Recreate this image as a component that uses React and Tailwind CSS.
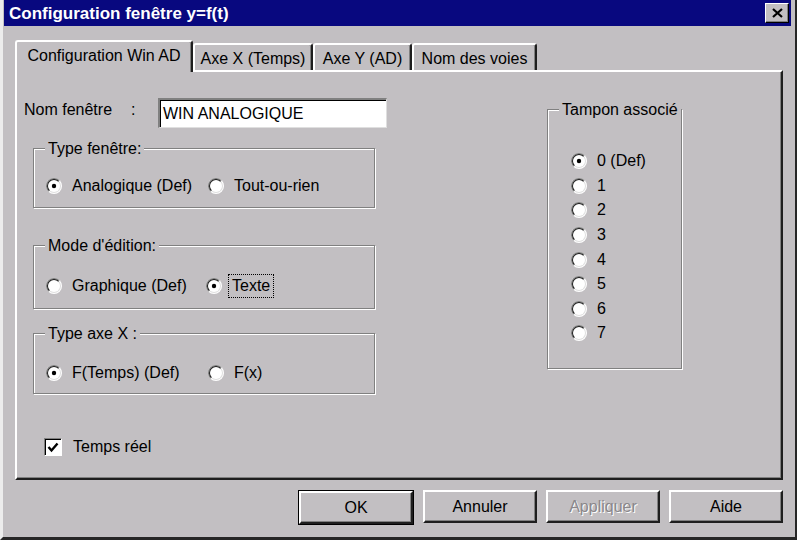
import React from 'react';

const FACE = 'bg-[#c2bfc2]';

function Radio({ checked }) {
  return (
    <svg width="16" height="16" viewBox="0 0 16 16" className="shrink-0">
      <circle cx="8" cy="8" r="8" fill="#ffffff" />
      <path d="M2.34 13.66 A8 8 0 0 1 13.66 2.34 Z" fill="#808080" />
      <circle cx="8" cy="8" r="7" fill="#dfdfdf" />
      <path d="M3.05 12.95 A7 7 0 0 1 12.95 3.05 Z" fill="#1a1a1a" />
      <circle cx="8" cy="8" r="6" fill="#ffffff" />
      {checked && <circle cx="8" cy="8" r="2.2" fill="#000000" />}
    </svg>
  );
}

function RadioItem({ checked, label, width, focused }) {
  return (
    <div className={`flex items-center gap-[10px] h-[20px] ${width || ''}`}>
      <Radio checked={checked} />
      {focused ? (
        <span className="border border-dotted border-black px-[3px] -ml-[4px] leading-[22px]">{label}</span>
      ) : (
        <span>{label}</span>
      )}
    </div>
  );
}

// etched group frame, caption sits over the top line
function GroupBox({ title, className, children }) {
  return (
    <div
      className={`relative border border-[#808080] shadow-[inset_1px_1px_0_#ffffff,1px_1px_0_#ffffff] ${className}`}
    >
      <span className={`absolute left-[11px] -top-[10px] px-[3px] ${FACE} leading-[20px] whitespace-nowrap`}>
        {title}
      </span>
      {children}
    </div>
  );
}

function Button({ children, disabled }) {
  return (
    <div
      className={`w-[114px] h-[33px] flex items-center justify-center ${FACE} border-t-2 border-l-2 border-t-white border-l-white border-r-2 border-b-2 border-r-[#1e1e1e] border-b-[#1e1e1e] shadow-[inset_-1px_-1px_0_#808080]`}
    >
      <span className={disabled ? 'text-[#8a878a] [text-shadow:1px_1px_0_#ffffff]' : ''}>{children}</span>
    </div>
  );
}

function Tab({ label, active, width }) {
  if (active) {
    return (
      <div
        className={`${width} h-[32px] pb-[2px] flex items-center justify-center ${FACE} border-t-2 border-l-2 border-t-white border-l-white border-r-2 border-r-[#1e1e1e] rounded-t-[3px] shadow-[inset_-1px_0_0_#808080]`}
      >
        {label}
      </div>
    );
  }
  return (
    <div
      className={`${width} h-[27px] mb-[2px] pt-[3px] flex items-center justify-center ${FACE} border-t-2 border-l-2 border-t-white border-l-white border-r-2 border-r-[#1e1e1e] rounded-t-[3px] shadow-[inset_-1px_0_0_#808080]`}
    >
      {label}
    </div>
  );
}

export default function App() {
  const buffers = ['0 (Def)', '1', '2', '3', '4', '5', '6', '7'];

  return (
    <div
      className={`w-[797px] h-[540px] overflow-hidden ${FACE} text-black font-['Liberation_Sans',Arial,sans-serif] text-[16px] leading-[20px] flex flex-col border-l-[3px] border-l-[#ececec] border-r-2 border-r-[#262626] border-b-[3px] border-b-[#262626] pl-px pr-[4px]`}
    >
      {/* Title bar */}
      <div className="h-[26px] shrink-0 bg-[#08087f] flex items-start pl-[5px] pr-[2px]">
        <span className="flex-1 text-white font-bold text-[17px] leading-[27px] whitespace-nowrap">
          Configuration fenêtre y=f(t)
        </span>
        <div
          className={`mt-[3px] w-[24px] h-[20px] flex items-center justify-center ${FACE} border-t border-l border-t-white border-l-white border-r border-b border-r-black border-b-black shadow-[inset_-1px_-1px_0_#808080]`}
        >
          <svg width="11" height="10" viewBox="0 0 11 10">
            <path d="M1 1 L10 9 M10 1 L1 9" stroke="#000" strokeWidth="2.2" />
          </svg>
        </div>
      </div>

      <div className="flex flex-col pl-[11px] pr-[8px] mt-[14px]">
        {/* Tabs */}
        <div className="relative z-10 flex items-end -mb-[2px]">
          <Tab label="Configuration Win AD" active width="w-[178px]" />
          <Tab label="Axe X (Temps)" width="w-[120px]" />
          <Tab label="Axe Y (AD)" width="w-[99px]" />
          <Tab label="Nom des voies" width="w-[125px]" />
        </div>

        {/* Tab page */}
        <div className="h-[410px] flex border-2 border-t-white border-l-white border-r-[#1e1e1e] border-b-[#1e1e1e] shadow-[inset_-1px_-1px_0_#808080]">
          <div className="w-[370px] shrink-0 flex flex-col pl-[7px] pt-[26px]">
            <div className="flex items-start h-[30px]">
              <span className="w-[107px] pt-[2px]">Nom fenêtre</span>
              <span className="w-[27px] pt-[2px]">:</span>
              <div className="w-[229px] h-[30px] bg-white flex items-center pl-[3px] border-t-2 border-l-2 border-t-[#808080] border-l-[#808080] border-r border-b border-r-[#dfdfdf] border-b-[#dfdfdf] shadow-[inset_1px_1px_0_#000000]">
                WIN ANALOGIQUE
              </div>
            </div>

            <GroupBox title="Type fenêtre:" className="mt-[20px] ml-[9px] w-[342px] h-[60px] pt-[27px] pl-[12px]">
              <div className="flex">
                <RadioItem checked label="Analogique (Def)" width="w-[162px]" />
                <RadioItem label="Tout-ou-rien" />
              </div>
            </GroupBox>

            <GroupBox title="Mode d'édition:" className="mt-[37px] ml-[9px] w-[342px] h-[64px] pt-[30px] pl-[12px]">
              <div className="flex">
                <RadioItem label="Graphique (Def)" width="w-[160px]" />
                <RadioItem checked focused label="Texte" />
              </div>
            </GroupBox>

            <GroupBox title="Type axe X :" className="mt-[24px] ml-[9px] w-[342px] h-[61px] pt-[29px] pl-[12px]">
              <div className="flex">
                <RadioItem checked label="F(Temps) (Def)" width="w-[162px]" />
                <RadioItem label="F(x)" />
              </div>
            </GroupBox>

            <div className="mt-[43px] ml-[20px] flex items-center gap-[11px]">
              <div className="w-[18px] h-[18px] bg-white flex items-center justify-center border border-t-[#808080] border-l-[#808080] border-r-white border-b-white shadow-[inset_1px_1px_0_#000000]">
                <svg width="12" height="11" viewBox="0 0 12 11">
                  <path d="M1.5 5 L4.5 8.5 L10.5 1.5" fill="none" stroke="#000" strokeWidth="2.4" />
                </svg>
              </div>
              <span>Temps réel</span>
            </div>
          </div>

          <GroupBox title="Tampon associé" className="ml-[160px] mt-[37px] w-[135px] h-[260px] pt-[39px] pl-[23px]">
            <div className="flex flex-col">
              {buffers.map((b, i) => (
                <div key={b} className="h-[24.6px] flex items-center">
                  <RadioItem checked={i === 0} label={b} />
                </div>
              ))}
            </div>
          </GroupBox>
        </div>

        {/* Dialog buttons */}
        <div className="mt-[10px] flex justify-end gap-[9px]">
          <div className="border border-black">
            <Button>OK</Button>
          </div>
          <Button>Annuler</Button>
          <Button disabled>Appliquer</Button>
          <Button>Aide</Button>
        </div>
      </div>
    </div>
  );
}
